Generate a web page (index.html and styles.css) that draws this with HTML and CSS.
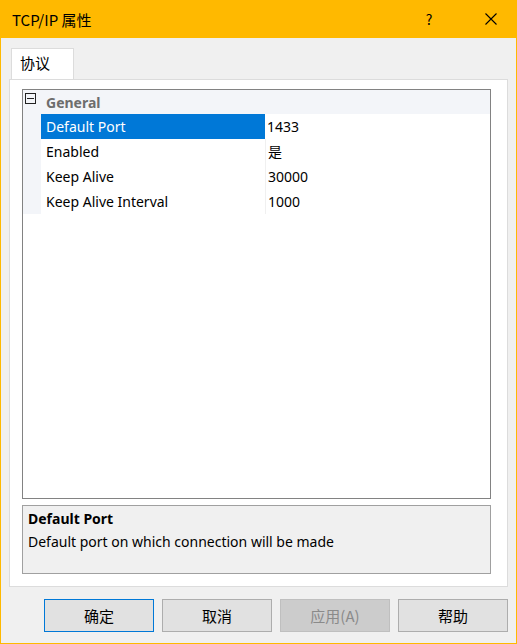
FILE: index.html
```html
<!DOCTYPE html>
<html lang="zh-CN">
<head>
<meta charset="utf-8">
<title>TCP/IP 属性</title>
<link rel="stylesheet" href="styles.css">
</head>
<body>
<div class="window">
  <div class="titlebar">
    <span class="title">TCP/IP 属性</span>
    <span class="help">?</span>
    <span class="close">
      <svg width="12" height="12" viewBox="0 0 12 12"><path d="M0.5 0.5 L11.5 11.5 M11.5 0.5 L0.5 11.5" stroke="#000" stroke-width="1.1" fill="none"/></svg>
    </span>
  </div>
  <div class="client">
    <div class="tabs">
      <div class="tab">协议</div>
    </div>
    <div class="page">
      <div class="grid">
        <div class="row header">
          <div class="gutter"><span class="toggle"></span></div>
          <div class="hname">General</div>
        </div>
        <div class="row selected">
          <div class="gutter"></div>
          <div class="name">Default Port</div>
          <div class="value">1433</div>
        </div>
        <div class="row">
          <div class="gutter"></div>
          <div class="name">Enabled</div>
          <div class="value">是</div>
        </div>
        <div class="row">
          <div class="gutter"></div>
          <div class="name">Keep Alive</div>
          <div class="value">30000</div>
        </div>
        <div class="row">
          <div class="gutter"></div>
          <div class="name">Keep Alive Interval</div>
          <div class="value">1000</div>
        </div>
      </div>
      <div class="desc">
        <div class="desc-title">Default Port</div>
        <div class="desc-text">Default port on which connection will be made</div>
      </div>
    </div>
    <div class="buttons">
      <button class="btn default">确定</button>
      <button class="btn">取消</button>
      <button class="btn disabled">应用(A)</button>
      <button class="btn">帮助</button>
    </div>
  </div>
</div>
</body>
</html>
```

FILE: styles.css
```css
* { box-sizing: border-box; }
html, body {
  margin: 0;
  padding: 0;
  width: 517px;
  height: 644px;
  overflow: hidden;
}
body {
  font-family: "Noto Sans", "Noto Sans CJK SC", sans-serif;
  font-size: 14px;
  color: #000;
  background: #f0f0f0;
}
.window {
  width: 517px;
  height: 644px;
  display: flex;
  flex-direction: column;
  border-left: 1px solid #ffb900;
  border-right: 1px solid #ffb900;
  border-bottom: 1px solid #ffb900;
}
.titlebar {
  height: 38px;
  flex: none;
  background: #ffb900;
  display: flex;
  align-items: center;
  margin: 0 -1px;
  padding-left: 12px;
  font-family: "Noto Sans CJK SC", sans-serif;
  font-size: 15px;
}
.title { flex: 1; }
.help {
  width: 20px;
  text-align: center;
  margin-right: 32px;
  font-size: 14px;
}
.close {
  width: 46px;
  display: flex;
  justify-content: center;
  padding-right: 6px;
}
.client {
  flex: 1;
  display: flex;
  flex-direction: column;
  padding: 10px 8px 0 8px;
}
.tabs {
  display: flex;
  padding-left: 2px;
  height: 31px;
}
.tab {
  width: 63px;
  background: #fff;
  border: 1px solid #dcdcdc;
  border-bottom: none;
  font-family: "Noto Sans CJK SC", sans-serif;
  font-size: 15px;
  padding: 3px 0 0 8px;
}
.page {
  background: #fff;
  border: 1px solid #dcdcdc;
  height: 508px;
  padding: 9px 16px 0 12px;
  display: flex;
  flex-direction: column;
}
.grid {
  height: 410px;
  border: 1px solid #828282;
  background: #fff;
}
.row {
  display: flex;
  height: 25px;
  align-items: center;
}
.gutter {
  width: 18px;
  height: 25px;
  flex: none;
  background: #f3f5f9;
  display: flex;
  align-items: flex-start;
  padding: 3px 0 0 2px;
}
.header {
  background: #f3f5f9;
  height: 24px;
}
.header .gutter { height: 24px; }
.toggle {
  width: 11px;
  height: 11px;
  border: 1px solid #222;
  position: relative;
  display: block;
}
.toggle::after {
  content: "";
  position: absolute;
  left: 1px;
  right: 1px;
  top: 4px;
  height: 1px;
  background: #222;
}
.hname {
  padding-left: 5px;
  font-weight: bold;
  color: #6d6d6d;
}
.name {
  width: 224px;
  height: 25px;
  line-height: 25px;
  padding-left: 5px;
  flex: none;
}
.value {
  flex: 1;
  height: 25px;
  line-height: 25px;
  padding-left: 2px;
  border-left: 1px solid #f0f0f0;
  font-family: "Noto Sans", "Noto Sans CJK SC", sans-serif;
}
.selected .name {
  background: #0078d7;
  color: #fff;
}
.selected .value { border-left-color: #fff; padding-left: 1px; }
.desc {
  margin-top: 6px;
  height: 69px;
  background: #f0f0f0;
  border: 1px solid #a0a0a0;
  padding: 3px 5px;
}
.desc-title {
  font-weight: bold;
  line-height: 20px;
}
.desc-text {
  margin-top: 3px;
  line-height: 20px;
}
.buttons {
  display: flex;
  justify-content: flex-end;
  gap: 8px;
  margin-top: 12px;
}
.btn {
  width: 110px;
  height: 33px;
  background: #e1e1e1;
  border: 1px solid #adadad;
  font-family: "Noto Sans CJK SC", sans-serif;
  font-size: 15px;
  color: #000;
  padding: 0;
}
.btn.default {
  border-color: #0078d7;
}
.btn.disabled {
  background: #cccccc;
  border-color: #bfbfbf;
  color: #8a8a8a;
}
```
